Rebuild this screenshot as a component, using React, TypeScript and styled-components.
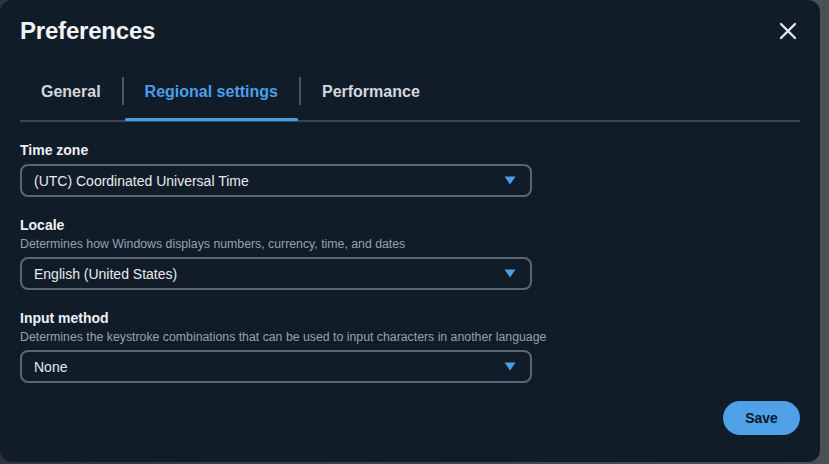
import React from "react";
import styled, { createGlobalStyle } from "styled-components";

const Global = createGlobalStyle`
  html, body { margin: 0; padding: 0; }
  body {
    width: 829px; height: 464px; overflow: hidden;
    background: linear-gradient(90deg, #2f343b, #4a5058);
    font-family: "Liberation Sans", Arial, sans-serif;
  }
`;

const Dialog = styled.div`
  box-sizing: border-box;
  width: 820px;
  height: 462px;
  background: #111c29;
  border-radius: 12px;
  padding: 16px 20px 0 20px;
  display: flex;
  flex-direction: column;
  color: #f1f3f5;
`;

const Header = styled.div`
  display: flex;
  align-items: center;
  justify-content: space-between;
  height: 30px;
`;

const Title = styled.h1`
  margin: 0;
  font-size: 24px;
  font-weight: 700;
  color: #f1f3f5;
  letter-spacing: -0.2px;
  line-height: 30px;
`;

const CloseBtn = styled.button`
  background: none;
  border: none;
  padding: 0;
  margin-right: 2px;
  width: 20px;
  height: 20px;
  display: flex;
  align-items: center;
  justify-content: center;
  cursor: pointer;
`;

const TabBar = styled.div`
  display: flex;
  align-items: center;
  margin-top: 30px;
  border-bottom: 2px solid #3a4654;
  height: 46px;
  box-sizing: border-box;
`;

const Tab = styled.div<{ $active?: boolean }>`
  position: relative;
  height: 100%;
  box-sizing: border-box;
  display: flex;
  align-items: center;
  padding: 0 21px 12px 21px;
  font-size: 16px;
  font-weight: 700;
  color: ${(p) => (p.$active ? "#4a9fe8" : "#d3d8de")};
  &::after {
    content: "";
    display: ${(p) => (p.$active ? "block" : "none")};
    position: absolute;
    left: 1px; right: 1px; bottom: -1px;
    height: 3px;
    border-radius: 2px;
    background: #4a9fe8;
  }
`;

const Divider = styled.div`
  width: 2px;
  height: 28px;
  background: #4a5563;
  margin-bottom: 14px;
`;

const Form = styled.div`
  display: flex;
  flex-direction: column;
  margin-top: 20px;
`;

const Field = styled.div`
  display: flex;
  flex-direction: column;
  margin-bottom: 20px;
`;

const Label = styled.div`
  font-size: 14px;
  font-weight: 700;
  color: #eef1f4;
  line-height: 16px;
`;

const Desc = styled.div`
  font-size: 12.3px;
  color: #98a2ad;
  line-height: 14px;
  margin-top: 4px;
`;

const Select = styled.div`
  box-sizing: border-box;
  width: 512px;
  height: 33px;
  margin-top: 6px;
  border: 2px solid #5b6673;
  border-radius: 8px;
  display: flex;
  align-items: center;
  justify-content: space-between;
  padding: 0 14px 0 12px;
  font-size: 14px;
  color: #e8ebee;
`;

const Footer = styled.div`
  display: flex;
  justify-content: flex-end;
  margin-top: -2px;
`;

const SaveBtn = styled.button`
  width: 77px;
  height: 34px;
  border-radius: 17px;
  border: none;
  background: #4fa0e6;
  color: #0d1826;
  font-family: "Liberation Sans", Arial, sans-serif;
  font-size: 14px;
  font-weight: 700;
  cursor: pointer;
`;

const Caret = () => (
  <svg width="12" height="9" viewBox="0 0 12 9">
    <path d="M0.5 0.5 H11.5 L6 8.5 Z" fill="#4a9fe8" />
  </svg>
);

const fields = [
  { label: "Time zone", value: "(UTC) Coordinated Universal Time" },
  { label: "Locale", desc: "Determines how Windows displays numbers, currency, time, and dates", value: "English (United States)" },
  { label: "Input method", desc: "Determines the keystroke combinations that can be used to input characters in another language", value: "None" },
];

export default function App() {
  return (
    <>
      <Global />
      <Dialog>
        <Header>
          <Title>Preferences</Title>
          <CloseBtn aria-label="Close">
            <svg width="18" height="18" viewBox="0 0 18 18">
              <path d="M2 2 L16 16 M16 2 L2 16" stroke="#e6e9ec" strokeWidth="2.4" strokeLinecap="round" />
            </svg>
          </CloseBtn>
        </Header>
        <TabBar>
          <Tab>General</Tab>
          <Divider />
          <Tab $active>Regional settings</Tab>
          <Divider />
          <Tab>Performance</Tab>
        </TabBar>
        <Form>
          {fields.map((f) => (
            <Field key={f.label}>
              <Label>{f.label}</Label>
              {f.desc && <Desc>{f.desc}</Desc>}
              <Select>
                <span>{f.value}</span>
                <Caret />
              </Select>
            </Field>
          ))}
        </Form>
        <Footer>
          <SaveBtn>Save</SaveBtn>
        </Footer>
      </Dialog>
    </>
  );
}
